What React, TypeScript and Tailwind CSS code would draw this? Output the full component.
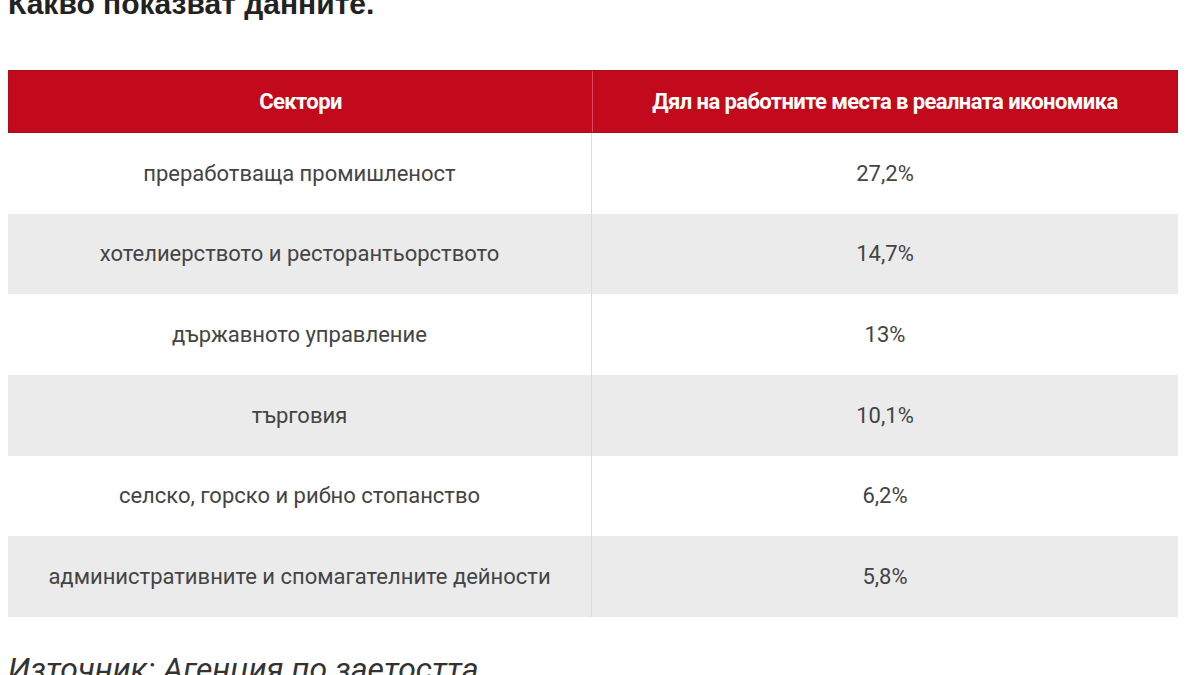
import React from "react";

const rows: [string, string][] = [
  ["преработваща промишленост", "27,2%"],
  ["хотелиерството и ресторантьорството", "14,7%"],
  ["държавното управление", "13%"],
  ["търговия", "10,1%"],
  ["селско, горско и рибно стопанство", "6,2%"],
  ["административните и спомагателните дейности", "5,8%"],
];

export default function App() {
  return (
    <div className="w-[1200px] h-[675px] overflow-hidden bg-white" style={{ fontFamily: "Roboto, 'Liberation Sans', sans-serif" }}>
      <div className="px-[8px]">
        <h2 className="mt-[-13px] text-[30px] leading-[34px] font-bold text-[#222]" style={{ fontFamily: "'Liberation Sans', Arial, sans-serif" }}>
          Какво показват данните.
        </h2>
        <div className="mt-[49px] w-[1170px]">
          <div className="flex h-[63px] bg-[#c20a1c] border border-[#a50f1f] text-white font-bold text-[22px] tracking-[-0.6px]">
            <div className="w-[584px] flex items-center justify-center border-r border-[#d9495a]">Сектори</div>
            <div className="flex-1 flex items-center justify-center">Дял на работните места в реалната икономика</div>
          </div>
          {rows.map(([a, b], i) => (
            <div key={i} className={`flex h-[80.67px] text-[22px] text-[#444] ${i % 2 === 1 ? "bg-[#ebebeb]" : "bg-white"}`}>
              <div className="w-[584px] flex items-center justify-center border-r border-[#dcdcdc]">{a}</div>
              <div className="flex-1 flex items-center justify-center">{b}</div>
            </div>
          ))}
        </div>
        <p className="mt-[28px] text-[32px] italic text-[#333]">Източник: Агенция по заетостта</p>
      </div>
    </div>
  );
}
